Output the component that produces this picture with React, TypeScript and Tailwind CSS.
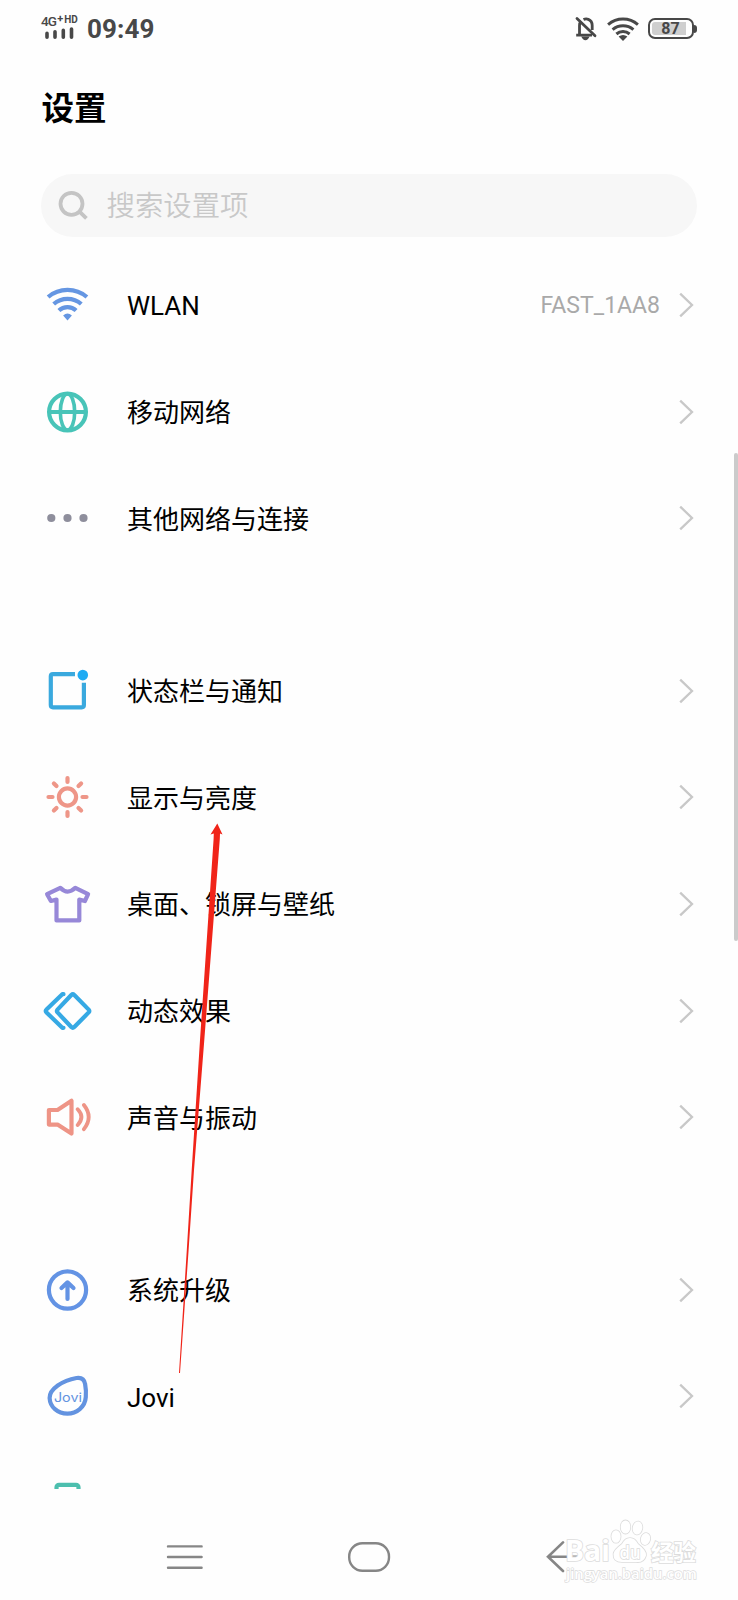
import type { ReactNode } from "react";

type Item = { label: string; icon: ReactNode; value?: string };

function Glyph({ color, children }: { color: string; children: ReactNode }) {
  return (
    <svg
      viewBox="-28.5 -28 56 56"
      className="h-14 w-14 shrink-0"
      fill="none"
      stroke={color}
      strokeWidth="4.2"
      strokeLinecap="round"
      strokeLinejoin="round"
    >
      {children}
    </svg>
  );
}

const network: Item[] = [
  {
    label: "WLAN",
    value: "FAST_1AA8",
    icon: (
      <Glyph color="#6596e2">
        <g strokeLinecap="butt">
          <path d="M-19.4 -8A30 30 0 0 1 19.4 -8" />
          <path d="M-13.8 -1A21 21 0 0 1 13.8 -1" />
          <path d="M-8.6 5.5A12.5 12.5 0 0 1 8.6 5.5" />
        </g>
        <path d="M-4.4 10.6Q0 6.4 4.4 10.6L0 15.4Z" fill="#6596e2" stroke="none" />
      </Glyph>
    ),
  },
  {
    label: "移动网络",
    icon: (
      <Glyph color="#48c4b8">
        <circle r="18.4" />
        <ellipse rx="7.2" ry="18" strokeWidth="3.6" />
        <path d="M-18 0H18" strokeWidth="3.8" />
      </Glyph>
    ),
  },
  {
    label: "其他网络与连接",
    icon: (
      <Glyph color="none">
        <g fill="#8e8e9c">
          <circle cx="-16.2" r="4.1" />
          <circle r="4.1" />
          <circle cx="16" r="4.1" />
        </g>
      </Glyph>
    ),
  },
];

const display: Item[] = [
  {
    label: "状态栏与通知",
    icon: (
      <Glyph color="#3aa9de">
        <path
          d="M7.5 -16.9H-14.5Q-16.7 -16.9 -16.7 -14.7V14Q-16.7 16.3 -14.5 16.3H14.2Q16.4 16.3 16.4 14V-8.2"
          strokeLinecap="butt"
        />
        <circle cx="15.3" cy="-15.9" r="5.3" fill="#1fabf3" stroke="none" />
      </Glyph>
    ),
  },
  {
    label: "显示与亮度",
    icon: (
      <Glyph color="#ee9688">
        <circle r="8.6" />
        <path d="M0 -19V-15M0 15V19M-19 0H-15M15 0H19M-13.6 -13.6L-11 -11M13.6 -13.6L11 -11M-13.6 13.6L-11 11M13.6 13.6L11 11" />
      </Glyph>
    ),
  },
  {
    label: "桌面、锁屏与壁纸",
    icon: (
      <Glyph color="#9788d8">
        <path d="M-7.2 -16.2Q0 -8.6 7.8 -16.2L20.6 -9.8L17.4 -3L11.8 -4.4V16.4H-11V-4.4L-16.6 -3L-20.4 -9.8Z" />
      </Glyph>
    ),
  },
  {
    label: "动态效果",
    icon: (
      <Glyph color="#36a9e4">
        <path d="M-4 -16.8H-5.2L-21 -1.4Q-22.4 0 -21 1.4L-5.2 16.8H-4" />
        <path d="M6.8 -16L21.2 -1.4Q22.4 0 21.2 1.4L6.8 16Q5.3 17.4 3.8 16L-10 1.4Q-11.2 0 -10 -1.4L3.8 -16Q5.3 -17.4 6.8 -16Z" />
      </Glyph>
    ),
  },
  {
    label: "声音与振动",
    icon: (
      <Glyph color="#ee9486">
        <path d="M-18.6 -7H-10L4 -16.2V16.6L-10 7.6H-18.6Z" />
        <path d="M10.2 -7.8Q17.6 0 10.2 8M16.4 -12Q26 0 16.4 12.2" strokeWidth="3.8" />
      </Glyph>
    ),
  },
];

const system: Item[] = [
  {
    label: "系统升级",
    icon: (
      <Glyph color="#6393e4">
        <circle r="18.6" />
        <path d="M0 9V-7M-6 -2L0 -7.6L6 -2" />
      </Glyph>
    ),
  },
  {
    label: "Jovi",
    icon: (
      <Glyph color="#6393e0">
        <path d="M-17.9 2C-18 -7 -5 -15.5 9 -18Q16.4 -19 17.6 -12C18.6 -7 18.6 -3 18.3 1C17.6 11 9 17.6 0 17.6C-10 17.6 -17.5 11 -17.9 2Z" />
        <text
          x="0.4"
          y="5.8"
          fill="#6393e0"
          stroke="none"
          textAnchor="middle"
          textLength="28"
          lengthAdjust="spacingAndGlyphs"
          fontSize="12.5"
          fontFamily="Inter, sans-serif"
        >
          Jovi
        </text>
      </Glyph>
    ),
  },
  {
    label: "",
    icon: (
      <Glyph color="#4cbfae">
        <rect x="-11" y="-18.2" width="22" height="41" rx="2.5" />
      </Glyph>
    ),
  },
];

function Row({ label, icon, value }: Item) {
  return (
    <li className="flex h-[106.6px] items-center pr-[44px] pl-[39px]">
      {icon}
      <span className="ml-8 flex-1 pt-[3px] text-[26px] leading-9 text-black">{label}</span>
      {value && <span className="mr-[18px] pt-[3px] text-[23px] leading-8 text-[#a9a9a9]">{value}</span>}
      {label && (
        <svg viewBox="-0.6 0 16 26" className="h-[26px] w-4 shrink-0" fill="none" stroke="#c8c8c8" strokeWidth="2.3">
          <path d="M1.6 1.6L13.4 13L1.6 24.4" />
        </svg>
      )}
    </li>
  );
}

function StatusBar() {
  return (
    <div className="flex h-14 shrink-0 items-center justify-between pr-[41.5px] pl-10 text-[#484848]">
      <div className="flex items-center">
        <div className="flex w-[40px] flex-col">
          <div className="flex h-3 items-start pl-px leading-3 font-medium whitespace-nowrap">
            <span className="text-[13.5px] tracking-[-0.8px]">4G</span>
            <span className="-mt-[2px] ml-px text-[11px] font-bold">+</span>
            <span className="-mt-px ml-px text-[10px] font-bold">HD</span>
          </div>
          <svg
            viewBox="0 0 40 14"
            className="h-3.5 w-10 overflow-visible"
            stroke="currentColor"
            strokeWidth="3.6"
            strokeLinecap="round"
          >
            <path d="M7 6.4V10.2M15 4.8V10.2M23.3 3.4V10.2M31.5 2V10.2" />
          </svg>
        </div>
        <span className="ml-[7px] pt-[2px] text-[26px] leading-8 font-bold tracking-[0.1px]">09:49</span>
      </div>
      <div className="flex items-center pt-px">
        <svg viewBox="0 0 22 26" className="h-[26px] w-[22px]" fill="none" stroke="currentColor" strokeWidth="2.8">
          <path d="M4.5 19V9.5Q4.5 7 6 5.6M8.5 3.6Q11 2.4 13.3 3.4Q17.2 5 17.2 9.5V14M1.2 19.2H17" />
          <path d="M2 2.5L20 19.8" strokeLinecap="round" />
          <path d="M6.2 20.5H14.6Q13 24.2 10.4 24.2T6.2 20.5Z" fill="currentColor" stroke="none" />
        </svg>
        <svg viewBox="-16 -12 32 24" className="ml-[10px] h-6 w-8" fill="none" stroke="currentColor" strokeWidth="3">
          <path d="M-14.9 -4.4A23 23 0 0 1 14.9 -4.4M-10.4 0.6A16 16 0 0 1 10.4 0.6M-6.6 5A10 10 0 0 1 6.6 5" />
          <path d="M-4.4 7.6Q0 4.4 4.4 7.6L0 12Z" fill="currentColor" stroke="none" />
        </svg>
        <div className="ml-[9px] flex items-center">
          <div className="flex h-[21px] w-[46px] items-center rounded-[7px] border-2 border-current p-[2px]">
            <div className="flex h-[13px] w-[34px] items-center justify-center rounded-l-[3px] bg-[#cfcfcf] pt-px pl-1 text-[16px] leading-none font-bold">
              87
            </div>
          </div>
          <div className="h-2 w-[3px] rounded-r-sm bg-[#484848]" />
        </div>
      </div>
    </div>
  );
}

function NavBar() {
  return (
    <nav className="flex h-[111px] items-start pt-[52px] pl-[166px]">
      <svg viewBox="0 0 38 32" className="h-8 w-[38px]" stroke="#868686" strokeWidth="2.4" strokeLinecap="round">
        <path d="M2 5.4H35.6M2 16H35.6M2 26.8H35.6" />
      </svg>
      <svg viewBox="0 0 44 32" className="ml-[143px] h-8 w-11" fill="none" stroke="#868686" strokeWidth="2.4">
        <rect x="2.2" y="2.2" width="39.8" height="27.6" rx="13.2" />
      </svg>
      <svg
        viewBox="0 0 36 32"
        className="ml-[155px] h-8 w-9"
        fill="none"
        stroke="#868686"
        strokeWidth="2.6"
        strokeLinecap="round"
      >
        <path d="M34 15.8H2M17 1.4L2 15.8L17 30" />
      </svg>
    </nav>
  );
}

function Watermark() {
  return (
    <div className="absolute top-[1518px] left-[564px] h-[76px] w-[140px]">
      <svg
        viewBox="0 0 140 76"
        className="h-full w-full"
        fill="#fff"
        stroke="#dcdcdc"
        strokeWidth="1.6"
        paintOrder="stroke"
        fontFamily="'Open Sans', 'Noto Sans CJK SC', sans-serif"
        fontWeight="700"
      >
        <text x="1" y="43" fontSize="29" textLength="45" lengthAdjust="spacingAndGlyphs">
          Bai
        </text>
        <ellipse cx="52" cy="18.5" rx="4.6" ry="6.3" />
        <ellipse cx="61.5" cy="9" rx="4.8" ry="6.6" />
        <ellipse cx="73.5" cy="10" rx="4.8" ry="6.6" transform="rotate(10 73.5 10)" />
        <ellipse cx="81.5" cy="21" rx="4.6" ry="6" transform="rotate(15 81.5 21)" />
        <path d="M66 20Q71 20 74 26Q83 33 82 37.5Q80 45 72 44H58Q49 44 49.5 36Q50 32 58 26Q61 20 66 20Z" />
        <text x="55.5" y="41" fontSize="18" fontWeight="600" textLength="21" lengthAdjust="spacingAndGlyphs">
          du
        </text>
        <text x="87" y="42.5" fontSize="22.5">
          经验
        </text>
        <text x="2" y="61" fontSize="15" fontWeight="600" textLength="131" lengthAdjust="spacingAndGlyphs" strokeWidth="1.4">
          jingyan.baidu.com
        </text>
      </svg>
    </div>
  );
}

export default function App() {
  return (
    <div className="relative h-[1600px] w-[738px] overflow-hidden bg-[#fefefe] font-[Roboto,'Noto_Sans_CJK_SC',sans-serif]">
      <div className="flex h-[1489px] flex-col overflow-hidden">
        <StatusBar />
        <h1 className="mt-[29px] ml-[41.5px] h-12 shrink-0 text-[32.5px] leading-[48px] font-bold text-black">设置</h1>
        <div className="mt-[41px] ml-[41px] flex h-[63px] w-[656px] shrink-0 items-center rounded-full bg-[#f7f7f7] pl-[17px]">
          <svg viewBox="0 0 32 32" className="h-8 w-8" fill="none" stroke="#c4c4c4" strokeWidth="3.8">
            <circle cx="13.5" cy="13.8" r="11" />
            <path d="M21.5 21.6L28.4 28.4" />
          </svg>
          <span className="ml-[16.5px] pt-[3px] text-[28.4px] leading-10 font-[350] text-[#c8c8c8]">搜索设置项</span>
        </div>
        <div className="mt-[14.7px] flex shrink-0 flex-col gap-[66px]">
          {[network, display, system].map((group, i) => (
            <ul key={i}>
              {group.map((item) => (
                <Row key={item.label} {...item} />
              ))}
            </ul>
          ))}
        </div>
      </div>
      <NavBar />

      <div className="absolute top-[453px] right-0 h-[488px] w-1 rounded-full bg-[#cbcbcb]" />
      <svg viewBox="0 0 50 552" className="absolute top-[823px] left-[176px] h-[552px] w-[50px]" fill="#f02419">
        <path d="M41.3 0.5L46.5 11.5L44 10.5L43.8 16L28.3 217L18 347L12.6 427L4 550H3L10.8 427L15.7 347L24 217L37.6 16L37.8 10.5L34.5 11.5Z" />
      </svg>
      <Watermark />
    </div>
  );
}
